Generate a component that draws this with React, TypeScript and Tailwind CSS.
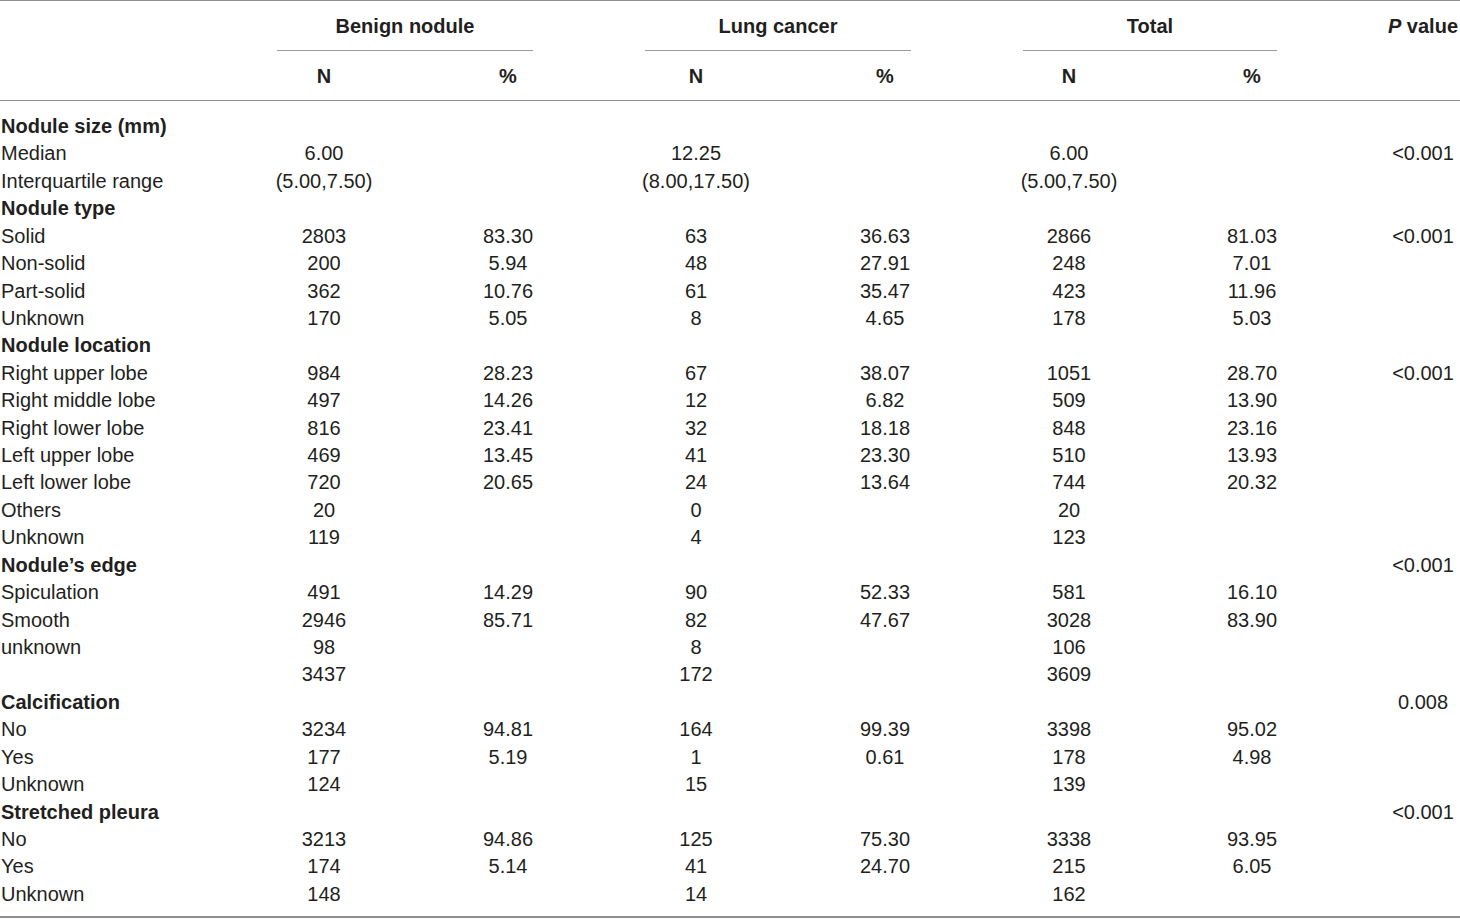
import React from 'react';

type Row = {
  label: string;
  bold?: boolean;
  cells?: string[];
  p?: string;
};

// Column order: benign N, benign %, cancer N, cancer %, total N, total %
const ROWS: Row[] = [
  { label: 'Nodule size (mm)', bold: true },
  { label: 'Median', cells: ['6.00', '', '12.25', '', '6.00', ''], p: '<0.001' },
  { label: 'Interquartile range', cells: ['(5.00,7.50)', '', '(8.00,17.50)', '', '(5.00,7.50)', ''] },
  { label: 'Nodule type', bold: true },
  { label: 'Solid', cells: ['2803', '83.30', '63', '36.63', '2866', '81.03'], p: '<0.001' },
  { label: 'Non-solid', cells: ['200', '5.94', '48', '27.91', '248', '7.01'] },
  { label: 'Part-solid', cells: ['362', '10.76', '61', '35.47', '423', '11.96'] },
  { label: 'Unknown', cells: ['170', '5.05', '8', '4.65', '178', '5.03'] },
  { label: 'Nodule location', bold: true },
  { label: 'Right upper lobe', cells: ['984', '28.23', '67', '38.07', '1051', '28.70'], p: '<0.001' },
  { label: 'Right middle lobe', cells: ['497', '14.26', '12', '6.82', '509', '13.90'] },
  { label: 'Right lower lobe', cells: ['816', '23.41', '32', '18.18', '848', '23.16'] },
  { label: 'Left upper lobe', cells: ['469', '13.45', '41', '23.30', '510', '13.93'] },
  { label: 'Left lower lobe', cells: ['720', '20.65', '24', '13.64', '744', '20.32'] },
  { label: 'Others', cells: ['20', '', '0', '', '20', ''] },
  { label: 'Unknown', cells: ['119', '', '4', '', '123', ''] },
  { label: 'Nodule\u2019s edge', bold: true, p: '<0.001' },
  { label: 'Spiculation', cells: ['491', '14.29', '90', '52.33', '581', '16.10'] },
  { label: 'Smooth', cells: ['2946', '85.71', '82', '47.67', '3028', '83.90'] },
  { label: 'unknown', cells: ['98', '', '8', '', '106', ''] },
  { label: '', cells: ['3437', '', '172', '', '3609', ''] },
  { label: 'Calcification', bold: true, p: '0.008' },
  { label: 'No', cells: ['3234', '94.81', '164', '99.39', '3398', '95.02'] },
  { label: 'Yes', cells: ['177', '5.19', '1', '0.61', '178', '4.98'] },
  { label: 'Unknown', cells: ['124', '', '15', '', '139', ''] },
  { label: 'Stretched pleura', bold: true, p: '<0.001' },
  { label: 'No', cells: ['3213', '94.86', '125', '75.30', '3338', '93.95'] },
  { label: 'Yes', cells: ['174', '5.14', '41', '24.70', '215', '6.05'] },
  { label: 'Unknown', cells: ['148', '', '14', '', '162', ''] }
];

const GRID = 'grid grid-cols-[232px_184px_184px_192px_186px_182px_184px_116px]';

const GroupHead = ({ title }: { title: string }) => (
  <div className="col-span-2 ml-[45px] mr-[67px] flex h-[50px] items-center justify-center border-b border-[#9a9a9a] font-bold">
    {title}
  </div>
);

export default function App() {
  return (
    <div className="h-[919px] w-[1460px] bg-white font-['Liberation_Sans',Arial,sans-serif] text-[20px] text-[#231f20]">
      <div className="border-t border-b border-[#8f8f8f]">
        {/* group headers */}
        <div className={`${GRID} h-[50px]`}>
          <div />
          <GroupHead title="Benign nodule" />
          <GroupHead title="Lung cancer" />
          <GroupHead title="Total" />
          <div className="flex items-center justify-center pl-[42px] font-bold">
            <span className="italic">P</span>&nbsp;value
          </div>
        </div>
        {/* N / % */}
        <div className={`${GRID} h-[49px] items-center font-bold`}>
          <div />
          {['N', '%', 'N', '%', 'N', '%'].map((h, i) => (
            <div key={i} className="text-center">
              {h}
            </div>
          ))}
          <div />
        </div>
      </div>

      <div className="border-b-2 border-[#8f8f8f] pt-[12px] pb-[8px]">
        {ROWS.map((r, i) => (
          <div key={i} className={`${GRID} h-[27.43px] leading-[27.43px]`}>
            <div className={`whitespace-nowrap pl-px ${r.bold ? 'font-bold' : ''}`}>{r.label}</div>
            {(r.cells ?? ['', '', '', '', '', '']).map((c, j) => (
              <div key={j} className="text-center whitespace-nowrap">
                {c}
              </div>
            ))}
            <div className="pl-[42px] text-center">{r.p ?? ''}</div>
          </div>
        ))}
      </div>
    </div>
  );
}
